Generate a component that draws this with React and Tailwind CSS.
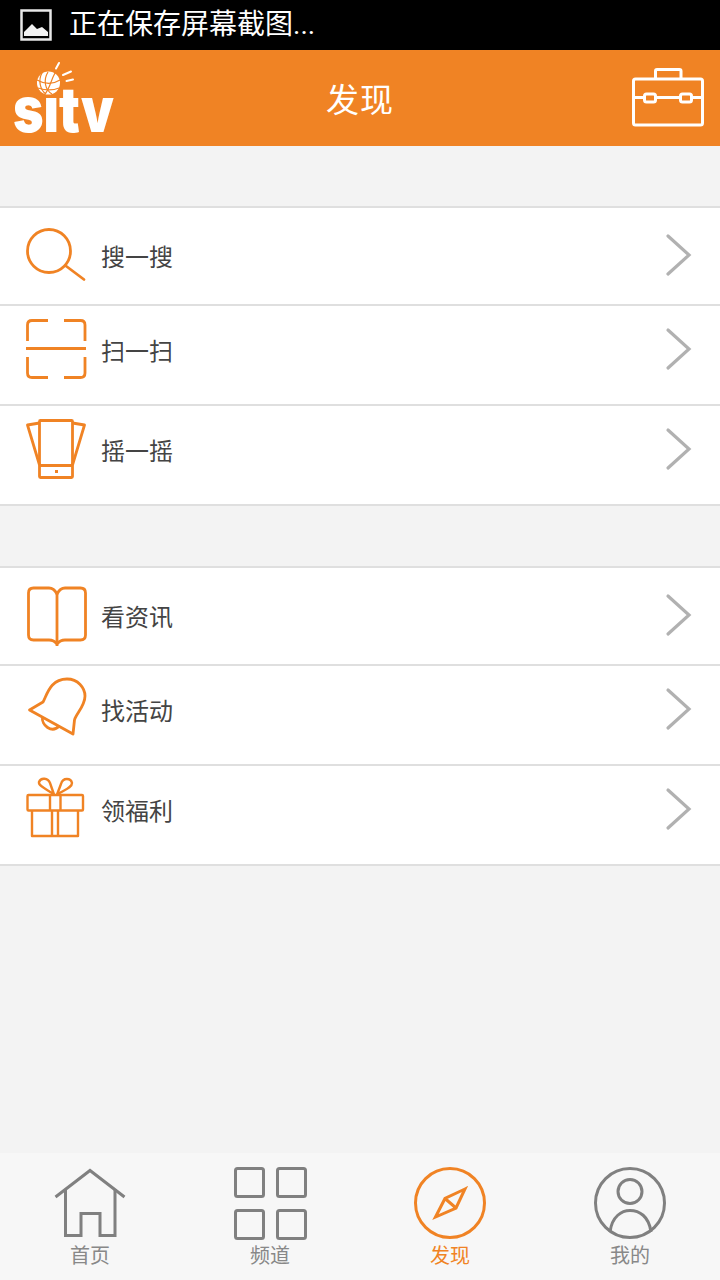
const orange = "#f08324";
const font = { fontFamily: 'Roboto, "Noto Sans CJK SC", "Noto Sans", sans-serif' };

function SearchIcon() {
  return (
    <g>
      <circle cx="49" cy="43" r="21.5" />
      <path d="M66 58 L84 71.5" strokeLinecap="round" />
    </g>
  );
}

function ScanIcon() {
  return (
    <g>
      <path d="M48 14.5 H32 Q27.5 14.5 27.5 19 V35" />
      <path d="M64 14.5 H80.5 Q85 14.5 85 19 V35" />
      <path d="M26 42.5 H86" />
      <path d="M48 71.5 H32 Q27.5 71.5 27.5 67 V51" />
      <path d="M64 71.5 H80.5 Q85 71.5 85 67 V51" />
    </g>
  );
}

function ShakeIcon() {
  return (
    <g strokeLinejoin="round">
      <rect x="39.5" y="14.5" width="33" height="57" rx="1" />
      <path d="M39.5 59.5 H72.5" />
      <path d="M39.5 17 L27.5 19 L39.5 59" />
      <path d="M72.5 17 L84.5 19 L72.5 59" />
      <rect x="55" y="64" width="3" height="3" fill={orange} stroke="none" />
    </g>
  );
}

function BookIcon() {
  return (
    <g strokeLinejoin="round">
      <path d="M57 26 C55 22 52 20 49 20 H33.5 Q28.5 20 28.5 25 V67 Q28.5 72 33.5 72 H49 Q54 72 57 76 Q60 72 65 72 H80.5 Q85.5 72 85.5 67 V25 Q85.5 20 80.5 20 H65 Q60 20 57 26 Z" />
      <path d="M57 26 V78" />
    </g>
  );
}

function BellIcon() {
  return (
    <g strokeLinejoin="round">
      <path d="M29.5 44 L43 36 C47 29 50 13 67 13 C78 13 85 22 85 30 C85 40 76 48 74.5 54 L73 68 Z" />
      <path d="M42.5 51 C41 59 52 68 59 60" />
    </g>
  );
}

function GiftIcon() {
  return (
    <g strokeWidth="2.4" strokeLinejoin="round">
      <rect x="27.5" y="29" width="55.5" height="15.5" rx="1" />
      <path d="M32 44.5 V70 H78 V44.5" />
      <path d="M50 29 V44.5 M60.5 29 V44.5 M52 44.5 V70 M58 44.5 V70" />
      <path d="M54 28.5 C48 24 38 20 39 16 C41 11 48 12 50 17 Z" />
      <path d="M57 28.5 L61 18 C63 11 71 12 72 17 C72 22 64 24 57 28.5 Z" />
    </g>
  );
}

function Row({ icon, label, first }) {
  return (
    <div className={first ? "flex h-[98px] items-start border-b-2 border-[#dfdfdf] bg-white pl-5 pr-7" : "flex h-[100px] items-start border-b-2 border-[#dfdfdf] bg-white pl-5 pr-7"}>
      <svg width="70" height="96" viewBox="20 0 70 96" fill="none" stroke={orange} strokeWidth="2.8" className="shrink-0">
        {icon}
      </svg>
      <span className={first ? "ml-[11px] mt-[33px] flex-1 text-[24px] leading-[34px] text-[#444]" : "ml-[11px] mt-[29px] flex-1 text-[24px] leading-[34px] text-[#444]"}>{label}</span>
      <svg width="32" height="48" viewBox="0 0 32 48" fill="none" stroke="#b1b1b1" strokeWidth="3.2" strokeLinecap="round" strokeLinejoin="miter" className={first ? "mt-[23px] shrink-0" : "mt-[19px] shrink-0"}>
        <path d="M8 5 L29 24 L8 43" />
      </svg>
    </div>
  );
}

function Logo() {
  return (
    <svg width="120" height="96" viewBox="0 50 120 96" className="shrink-0 overflow-visible">
      <text x="13" y="132" textLength="101" lengthAdjust="spacingAndGlyphs" fontFamily="Inter, sans-serif" fontWeight="900" fontSize="63" fill="#fff">sitv</text>
      <circle cx="48" cy="83" r="14" fill={orange} />
      <circle cx="48.5" cy="83" r="11.5" fill="#fff" />
      <g fill="none" stroke={orange} strokeWidth="1.2">
        <path d="M42 73 C38 80 40 90 46 94" />
        <path d="M48 72 C43 80 45 90 52 94" />
        <path d="M55 73 C51 80 50 88 45 94" />
        <path d="M37 80 C44 84 52 85 60 80" />
        <path d="M38 88 C44 90 52 91 59 88" />
      </g>
      <g stroke="#fff" strokeWidth="2" strokeLinecap="round">
        <path d="M59 63 L56 68.5" />
        <path d="M71 71.5 L63 75" />
        <path d="M73 79.5 L66.5 81" />
      </g>
    </svg>
  );
}

function Briefcase() {
  return (
    <svg width="120" height="96" viewBox="600 50 120 96" fill="none" stroke="#fff" strokeWidth="3" strokeLinejoin="round" className="shrink-0">
      <rect x="633.5" y="79" width="69" height="46" rx="2" />
      <path d="M655.5 79 V71 Q655.5 69.5 657 69.5 H679.5 Q681 69.5 681 71 V79" />
      <path d="M634 97.5 H644.5 M656 97.5 H680.5 M692 97.5 H703" />
      <rect x="644.5" y="94" width="11" height="8" rx="2" />
      <rect x="680.5" y="94" width="11" height="8" rx="2" />
    </svg>
  );
}

function Tab({ label, active, cx, children }) {
  return (
    <div className="flex flex-col items-center pt-3">
      <svg width="80" height="76" viewBox={`${cx - 40} 1165 80 76`} fill="none" stroke={active ? orange : "#808080"} strokeWidth="3">
        {children}
      </svg>
      <span className={active ? "text-[20px] leading-[30px] text-[#f08324]" : "text-[20px] leading-[30px] text-[#888]"}>{label}</span>
    </div>
  );
}

export default function App() {
  return (
    <div className="flex h-[1280px] w-[720px] flex-col overflow-hidden bg-[#f3f3f3]" style={font}>
      <div className="flex h-[50px] shrink-0 items-center bg-black pl-5">
        <svg width="32" height="32" viewBox="0 0 32 32" fill="none" className="shrink-0">
          <rect x="1.5" y="1.5" width="29" height="29" stroke="#e8e8e8" strokeWidth="2.5" />
          <path d="M4 27 V23 L12 15 L17 20 L22 18 L28 23 V27 Z" fill="#f2f2f2" />
        </svg>
        <span className="ml-[17px] text-[28px] leading-[44px] text-white">正在保存屏幕截图...</span>
      </div>

      <div className="flex h-[96px] shrink-0 items-center bg-[#f08324]">
        <Logo />
        <h1 className="flex-1 pt-[6px] text-center text-[33px] leading-[90px] font-normal tracking-[1px] text-white">发现</h1>
        <Briefcase />
      </div>

      <div className="mt-[60px] border-t-2 border-[#dfdfdf]">
        <Row first icon={<SearchIcon />} label="搜一搜" />
        <Row icon={<ScanIcon />} label="扫一扫" />
        <Row icon={<ShakeIcon />} label="摇一摇" />
      </div>

      <div className="mt-[60px] border-t-2 border-[#dfdfdf]">
        <Row first icon={<BookIcon />} label="看资讯" />
        <Row icon={<BellIcon />} label="找活动" />
        <Row icon={<GiftIcon />} label="领福利" />
      </div>

      <div className="flex-1" />

      <div className="grid h-[127px] shrink-0 grid-cols-4 bg-[#f7f7f7]">
        <Tab label="首页" cx={90}>
          <path d="M55.5 1197 L90 1170.5 L124.5 1197" />
          <path d="M65.5 1189 V1235.5 H81 V1213.5 H100 V1235.5 H115 V1189" />
        </Tab>
        <Tab label="频道" cx={270}>
          <rect x="235.5" y="1168.5" width="28" height="28" rx="2" />
          <rect x="277.5" y="1168.5" width="28" height="28" rx="2" />
          <rect x="235.5" y="1210.5" width="28" height="28" rx="2" />
          <rect x="277.5" y="1210.5" width="28" height="28" rx="2" />
        </Tab>
        <Tab label="发现" active cx={450}>
          <circle cx="450" cy="1203" r="34.5" />
          <path d="M465 1189 L445 1198.5 L435.5 1217 L456 1208 Z M445 1198.5 L456 1208" strokeLinejoin="miter" />
        </Tab>
        <Tab label="我的" cx={630}>
          <circle cx="630" cy="1203" r="34.5" />
          <circle cx="630" cy="1191.5" r="12" />
          <path d="M610 1232 C612 1216 622 1210.5 630 1210.5 C639 1210.5 649 1216 651 1232" />
        </Tab>
      </div>
    </div>
  );
}
